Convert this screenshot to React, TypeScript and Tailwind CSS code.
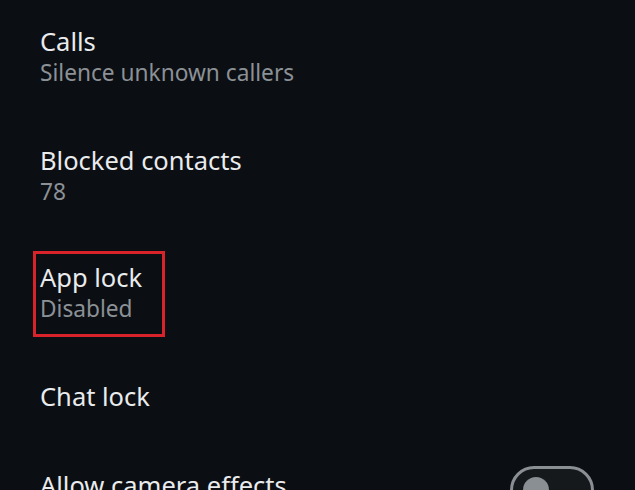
import React from "react";

interface RowProps {
    title: string;
    subtitle?: string;
    highlight?: boolean;
}

const Row: React.FC<RowProps> = ({ title, subtitle, highlight }) => {
    const text = (
        <div className="flex flex-col">
            <span className="text-[25.5px] leading-[34px] text-[#e9ebed]">{title}</span>
            {subtitle && <span className="text-[22.7px] leading-[30px] text-[#8b9196]">{subtitle}</span>}
        </div>
    );
    return (
        <div className="pt-[24px] pb-[31px] px-10 flex">
            {highlight ? (
                <div className="-ml-[7px] -mt-[11px] -mb-[13px] w-[132px] border-[3px] border-[#d8232a] pl-1 pt-[6px] pb-[10px]">
                    {text}
                </div>
            ) : (
                text
            )}
        </div>
    );
};

export default function App() {
    return (
        <div
            className="w-[635px] h-[490px] overflow-hidden bg-[#0b0e12]"
            style={{ fontFamily: '"Noto Sans", "Open Sans", sans-serif' }}
        >
            <Row title="Calls" subtitle="Silence unknown callers" />
            <Row title="Blocked contacts" subtitle="78" />
            <Row title="App lock" subtitle="Disabled" highlight />
            <Row title="Chat lock" />
            <div className="pt-[22px] pb-[33px] pl-10 pr-[41px] flex items-start justify-between">
                <span className="mt-[2px] text-[25.5px] leading-[34px] text-[#e9ebed]">Allow camera effects</span>
                <div className="w-[84px] h-[48px] rounded-full border-[3px] border-[#8a8f94] bg-[#15191c] flex items-center pl-[10px]">
                    <div className="w-[26px] h-[26px] rounded-full bg-[#8a8f94]" />
                </div>
            </div>
        </div>
    );
}
